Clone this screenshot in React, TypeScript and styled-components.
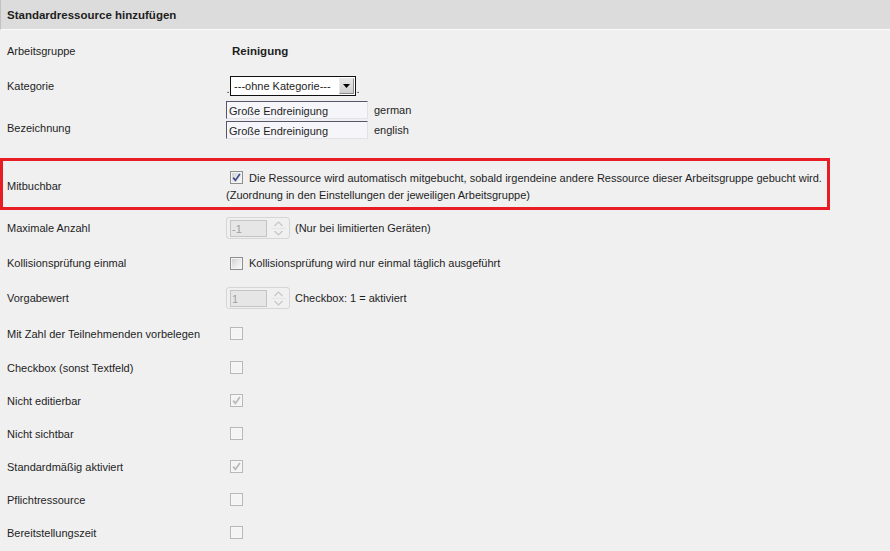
import React from "react";
import styled, { createGlobalStyle, css } from "styled-components";

const GlobalStyle = createGlobalStyle`
  html, body {
    margin: 0;
    padding: 0;
    background: #f0f0f0;
  }
  body {
    font-family: "Liberation Sans", Arial, sans-serif;
    font-size: 11px;
    color: #1e1e1e;
    white-space: nowrap;
  }
`;

const Page = styled.div`
  width: 890px;
  background: #f0f0f0;
`;

const Header = styled.div`
  height: 29px;
  display: flex;
  align-items: center;
  padding-left: 6px;
  background: #dcdcdc;
  border-left: 1px solid #c2c2c2;
  border-bottom: 1px solid #fbfbfb;
  font-weight: bold;
  font-size: 11.5px;
`;

const Row = styled.div<{ $h: number; $top?: number; $start?: boolean; $marked?: boolean }>`
  display: flex;
  align-items: ${(p) => (p.$start ? "flex-start" : "center")};
  box-sizing: border-box;
  height: ${(p) => p.$h}px;
  padding-top: ${(p) => p.$top ?? 0}px;
  ${(p) =>
    p.$marked &&
    css`
      width: 830px;
      outline: 3px solid #e81c24;
      outline-offset: -3px;
    `}
`;

const Label = styled.div<{ $top?: number }>`
  flex: none;
  box-sizing: border-box;
  width: 226px;
  padding-left: 7px;
  padding-top: ${(p) => p.$top ?? 0}px;
  line-height: 14px;
`;

const Value = styled.div`
  display: flex;
  align-items: center;
  line-height: 14px;
`;

const Strong = styled.span`
  font-weight: bold;
  font-size: 11.5px;
  padding-left: 6px;
`;

const Dot = styled.span`
  align-self: flex-end;
  line-height: 14px;
  padding: 0 0.5px;
`;

const Select = styled.div`
  display: flex;
  align-items: center;
  box-sizing: border-box;
  width: 126px;
  height: 20px;
  border: 1px solid #111;
  background: #fff;
  padding-left: 3px;
  justify-content: space-between;
`;

const SelectButton = styled.span`
  display: flex;
  align-items: center;
  justify-content: center;
  box-sizing: border-box;
  width: 15px;
  height: 16px;
  margin-right: 1px;
  border: 1px solid #8a8a8a;
  border-top-color: #e8e8e8;
  border-left-color: #e8e8e8;
  background: linear-gradient(#e6e6e6, #cfcfcf);
`;

const Names = styled.div`
  display: flex;
  flex-direction: column;
  gap: 2px;
  margin-top: 1px;
`;

const NameLine = styled.div`
  display: flex;
  align-items: center;
`;

const TextInput = styled.div`
  box-sizing: border-box;
  width: 142px;
  height: 18px;
  padding: 2px 0 0 2px;
  border: 1px solid #e2e2ea;
  border-top-color: #55566a;
  border-left-color: #55566a;
  background: #f6f6fa;
  line-height: 14px;
`;

const Lang = styled.span`
  margin-left: 6px;
  margin-top: -1px;
`;

const Lines = styled.div`
  display: flex;
  flex-direction: column;
`;

const Line = styled.div`
  display: flex;
  align-items: center;
  height: 17px;
`;

const Box = styled.span<{ $disabled?: boolean }>`
  flex: none;
  display: inline-flex;
  align-items: center;
  justify-content: center;
  box-sizing: border-box;
  width: 13px;
  height: 13px;
  margin-left: 4px;
  border: 1px solid ${(p) => (p.$disabled ? "#b8b8b8" : "#8e8f8f")};
  background: ${(p) =>
    p.$disabled ? "#f4f4f4" : "linear-gradient(135deg, #cdcdcd 0%, #eaeaea 55%, #fbfbfb 100%)"};
  box-shadow: inset 0 0 0 1px ${(p) => (p.$disabled ? "#f7f7f7" : "#f3f3f3")};
`;

const After = styled.span`
  margin-left: 6px;
`;

const Spinner = styled.div`
  display: flex;
  align-items: center;
  box-sizing: border-box;
  width: 64px;
  height: 22px;
  padding: 0 2px 0 3px;
  border: 1px solid #d6d6d6;
  border-radius: 3px;
  background: #f0f0f0;
`;

const SpinField = styled.div`
  box-sizing: border-box;
  width: 39px;
  height: 17px;
  padding: 1px 0 0 1px;
  border: 1px solid #c4c4c4;
  background: #e6e6e6;
  color: #a0a0a0;
  line-height: 14px;
`;

const SpinArrows = styled.span`
  display: flex;
  margin-left: 3px;
`;

const Note = styled.span`
  margin-left: 5px;
`;

type CheckProps = { checked?: boolean; disabled?: boolean };

const Check: React.FC<CheckProps> = ({ checked, disabled }) => (
  <Box $disabled={disabled}>
    {checked && (
      <svg width="9" height="9" viewBox="0 0 9 9">
        <path
          d="M1.2 4.6 L3.4 7.4 L7.9 0.9"
          fill="none"
          stroke={disabled ? "#b9b9b9" : "#3f4f8c"}
          strokeWidth="1.7"
        />
      </svg>
    )}
  </Box>
);

const Arrows: React.FC = () => (
  <SpinArrows>
    <svg width="17" height="19" viewBox="0 0 17 19">
      <path d="M4.5 7 L8.5 3 L12.5 7" fill="none" stroke="#c6c6c6" strokeWidth="1.2" />
      <line x1="1" y1="9.5" x2="16" y2="9.5" stroke="#e4e4e4" strokeWidth="1" />
      <path d="M4.5 12 L8.5 16 L12.5 12" fill="none" stroke="#c6c6c6" strokeWidth="1.2" />
    </svg>
  </SpinArrows>
);

const NumberBox: React.FC<{ value: string }> = ({ value }) => (
  <Spinner>
    <SpinField>{value}</SpinField>
    <Arrows />
  </Spinner>
);

const flags: { label: string; checked?: boolean }[] = [
  { label: "Checkbox (sonst Textfeld)" },
  { label: "Nicht editierbar", checked: true },
  { label: "Nicht sichtbar" },
  { label: "Standardmäßig aktiviert", checked: true },
  { label: "Pflichtressource" },
  { label: "Bereitstellungszeit" },
];

const App: React.FC = () => {
  return (
    <Page>
      <GlobalStyle />
      <Header>Standardressource hinzufügen</Header>

      <Row $h={42}>
        <Label>Arbeitsgruppe</Label>
        <Value>
          <Strong>Reinigung</Strong>
        </Value>
      </Row>

      <Row $h={28}>
        <Label>Kategorie</Label>
        <Value>
          <Dot>.</Dot>
          <Select>
            <span>---ohne Kategorie---</span>
            <SelectButton>
              <svg width="7" height="4" viewBox="0 0 7 4">
                <path d="M0 0 H7 L3.5 4 Z" fill="#000" />
              </svg>
            </SelectButton>
          </Select>
          <Dot>.</Dot>
        </Value>
      </Row>

      <Row $h={58} $start>
        <Label $top={21}>Bezeichnung</Label>
        <Names>
          <NameLine>
            <TextInput>Große Endreinigung</TextInput>
            <Lang>german</Lang>
          </NameLine>
          <NameLine>
            <TextInput>Große Endreinigung</TextInput>
            <Lang>english</Lang>
          </NameLine>
        </Names>
      </Row>

      <Row $h={52} $top={4} $marked>
        <Label>Mitbuchbar</Label>
        <Lines>
          <Line>
            <Check checked />
            <After>
              Die Ressource wird automatisch mitgebucht, sobald irgendeine andere Ressource dieser
              Arbeitsgruppe gebucht wird.
            </After>
          </Line>
          <Line>(Zuordnung in den Einstellungen der jeweiligen Arbeitsgruppe)</Line>
        </Lines>
      </Row>

      <Row $h={36}>
        <Label>Maximale Anzahl</Label>
        <Value>
          <NumberBox value="-1" />
          <Note>(Nur bei limitierten Geräten)</Note>
        </Value>
      </Row>

      <Row $h={34}>
        <Label>Kollisionsprüfung einmal</Label>
        <Value>
          <Check />
          <After>Kollisionsprüfung wird nur einmal täglich ausgeführt</After>
        </Value>
      </Row>

      <Row $h={36}>
        <Label>Vorgabewert</Label>
        <Value>
          <NumberBox value="1" />
          <Note>Checkbox: 1 = aktiviert</Note>
        </Value>
      </Row>

      <Row $h={35}>
        <Label>Mit Zahl der Teilnehmenden vorbelegen</Label>
        <Value>
          <Check disabled />
        </Value>
      </Row>

      {flags.map((f) => (
        <Row $h={33} key={f.label}>
          <Label>{f.label}</Label>
          <Value>
            <Check disabled checked={f.checked} />
          </Value>
        </Row>
      ))}
    </Page>
  );
};

export default App;
